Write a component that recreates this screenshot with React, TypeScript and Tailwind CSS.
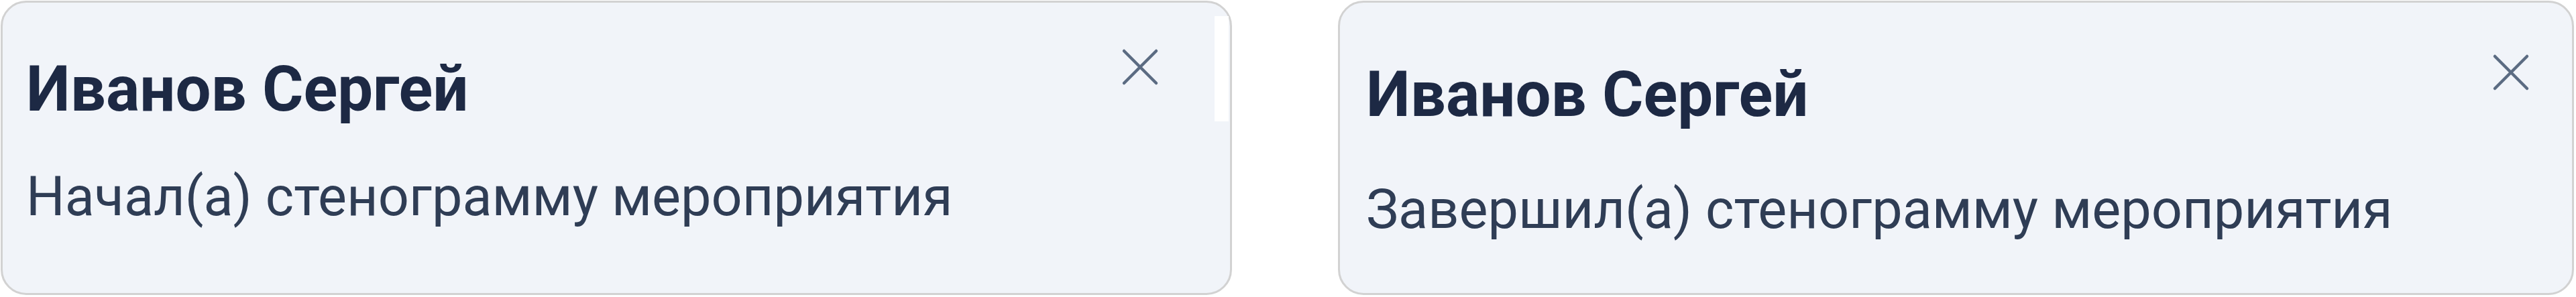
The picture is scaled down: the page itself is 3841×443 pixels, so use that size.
import React from "react";

// Two toast-like notification cards about a transcript (стенограмма)

function CloseIcon() {
  return (
    <svg viewBox="0 0 60 60" className="w-[60px] h-[60px] shrink-0" fill="none">
      <path d="M6 6 L54 54 M54 6 L6 54" stroke="#5b6b82" strokeWidth="4.5" strokeLinecap="round" />
    </svg>
  );
}

interface NoticeProps {
  name: string;
  text: string;
  variant: "start" | "end";
}

function Notice({ name, text, variant }: NoticeProps) {
  const isStart = variant === "start";
  return (
    <div
      className={`relative flex flex-col rounded-[38px] border-[3px] border-[#d2d2d2] bg-[#f1f4f9] ${
        isStart
          ? "w-[1836px] h-[439px] pt-[77px] pl-[35px] pr-[104px]"
          : "w-[1843px] h-[439px] pt-[85px] pl-[39px] pr-[61px]"
      }`}
    >
      {isStart && <div className="absolute top-[20px] right-[2px] w-[21px] h-[157px] bg-white" />}
      <div className="flex items-start justify-between">
        <div className="text-[94px] leading-[104px] font-bold text-[#1d2944]">{name}</div>
        <div className={isStart ? "-mt-[11px]" : "-mt-[11px]"}>
          <CloseIcon />
        </div>
      </div>
      <div
        className={`text-[81px] leading-[94px] text-[#2f3d55] ${isStart ? "mt-[62px]" : "mt-[73px]"}`}
      >
        {text}
      </div>
    </div>
  );
}

export default function App() {
  return (
    <div
      className="w-[3841px] h-[443px] bg-white flex items-start pt-[1px] pl-[1px] gap-[158px]"
      style={{ fontFamily: "Roboto, 'Noto Sans', sans-serif" }}
    >
      <Notice name="Иванов Сергей" text="Начал(а) стенограмму мероприятия" variant="start" />
      <Notice name="Иванов Сергей" text="Завершил(а) стенограмму мероприятия" variant="end" />
    </div>
  );
}
